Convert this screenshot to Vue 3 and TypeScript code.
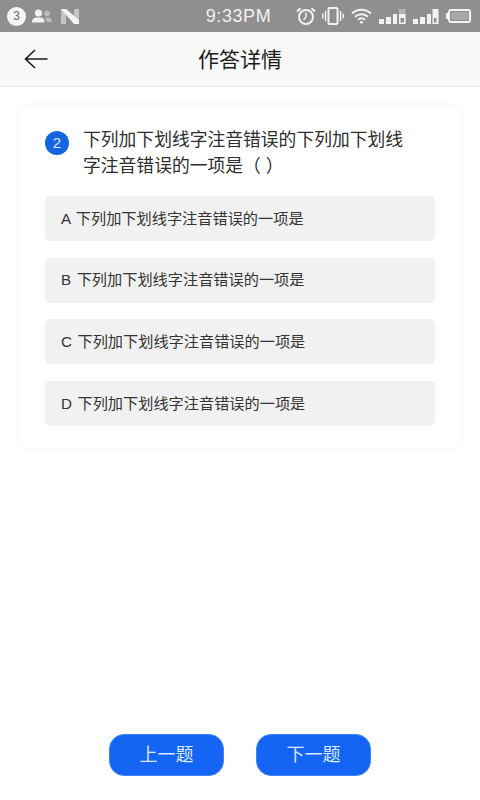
<script setup lang="ts">
const options = ['A', 'B', 'C', 'D'].map((k) => `${k} 下列加下划线字注音错误的一项是`)
</script>

<template>
  <div class="page">
    <div class="status">
      <div class="st-left">
        <span class="num">3</span>
        <svg class="people" width="20" height="14" viewBox="0 0 20 14">
          <circle cx="6.500" cy="4" r="3.600" fill="#f2f2f2" />
          <path d="M0 13.500c0-3 .8-4 4-5h5c3 1 3.500 2 3.500 5z" fill="#f2f2f2" />
          <circle cx="15" cy="4.500" r="2.800" fill="#bdbdbd" />
          <path d="M13 8.500h3.500c2.500.8 3.500 2 3.500 4.500h-5.500c0-2-.5-3.300-1.500-4.500z" fill="#bdbdbd" />
        </svg>
        <svg class="n" width="18" height="15" viewBox="0 0 18 15">
          <path d="M0 0h5v15H0z" fill="#c4c4c4" />
          <path d="M13 0h5v15h-5z" fill="#c4c4c4" />
          <path d="M0 0h5l13 11v4h-5z" fill="#f4f4f4" />
        </svg>
      </div>
      <span class="time">9:33PM</span>
      <div class="st-right">
        <svg width="20" height="18" viewBox="0 0 20 18" fill="none" stroke="#f2f2f2">
          <circle cx="10" cy="10" r="7" stroke-width="2" />
          <path d="M10 5.500V10l-2.500 3" stroke-width="1.500" />
          <path d="M1 4.500L4.500 1.200M19 4.500L15.500 1.200" stroke-width="2" />
        </svg>
        <svg class="vib" width="22" height="18" viewBox="0 0 22 18" fill="none" stroke="#f2f2f2" stroke-width="1.400">
          <rect x="6.500" y="1" width="9" height="16" rx="1" stroke-width="2" />
          <path d="M3.500 4v10M.8 6.500v5M18.500 4v10M21.200 6.500v5" />
        </svg>
        <svg class="wifi" width="21" height="16" viewBox="0 0 21 16" fill="none" stroke="#f2f2f2" stroke-width="2">
          <path d="M1 5.500c5.500-5 13.500-5 19 0M4 8.800c3.800-3.300 9.200-3.300 13 0M7 11.800c2-1.700 5-1.700 7 0" />
          <circle cx="10.500" cy="14.300" r="1.400" fill="#f2f2f2" stroke="none" />
        </svg>
        <svg class="sig" width="27" height="15" viewBox="0 0 27 15" fill="#f2f2f2">
          <rect x="0" y="10" width="5" height="5" />
          <rect x="7" y="8" width="5" height="7" />
          <rect x="14" y="5" width="4" height="10" />
          <path d="M20 0h6.500v15H20z" fill="#b4b4b4" />
          <path d="M20 5h6.500v10H20z" />
          <rect x="21.500" y="9" width="3.500" height="4.500" fill="#8f8f8f" />
        </svg>
        <svg class="sig" width="26" height="15" viewBox="0 0 26 15" fill="#f2f2f2">
          <rect x="0" y="10" width="5" height="5" />
          <rect x="7" y="8" width="5" height="7" />
          <rect x="14" y="5" width="4" height="10" />
          <path d="M19.500 0h6v15h-6z" />
          <rect x="21" y="9" width="2.500" height="4.500" fill="#8f8f8f" />
        </svg>
        <div class="battery"><span></span></div>
      </div>
    </div>

    <header class="nav">
      <svg class="back" width="24" height="20" viewBox="0 0 24 20" fill="none" stroke="#1c1c1c" stroke-width="1.600">
        <path d="M23.500 10H1.500M11 1L1.500 10l9.500 9" />
      </svg>
      <h1>作答详情</h1>
    </header>

    <main class="card">
      <div class="question">
        <span class="badge">2</span>
        <p>下列加下划线字注音错误的下列加下划线字注音错误的一项是（ ）</p>
      </div>
      <div class="options">
        <div v-for="o in options" :key="o" class="option">{{ o }}</div>
      </div>
    </main>

    <footer class="actions">
      <button type="button">上一题</button>
      <button type="button">下一题</button>
    </footer>
  </div>
</template>

<style scoped>
.page {
  width: 480px;
  height: 800px;
  display: flex;
  flex-direction: column;
  background: #fff;
  font-family: "Liberation Sans", "Noto Sans CJK SC", sans-serif;
  overflow: hidden;
}
.status {
  height: 32px;
  flex: none;
  background: #8f8f8f;
  color: #f2f2f2;
  display: grid;
  grid-template-columns: 1fr auto 1fr;
  align-items: center;
  padding: 0 9px 0 7px;
}
.st-left { display: flex; align-items: center; }
.people { margin-left: 6px; }
.n { margin-left: 9px; }
.num {
  width: 19px;
  height: 19px;
  border-radius: 50%;
  background: #f6f6f6;
  color: #666;
  font-size: 12px;
  line-height: 19px;
  text-align: center;
}
.time {
  font-family: "Liberation Sans", sans-serif;
  font-size: 18px;
  letter-spacing: 0.6px;
  margin-left: -1px;
}
.st-right { display: flex; align-items: center; justify-content: flex-end; }
.vib { margin-left: 6px; }
.wifi { margin-left: 7px; }
.sig { margin-left: 7px; }
.battery {
  position: relative;
  width: 23px;
  height: 14px;
  margin-left: 9px;
  border: 2px solid #f2f2f2;
  border-radius: 3px;
  padding: 1px;
  box-sizing: border-box;
}
.battery::before {
  content: "";
  position: absolute;
  left: -4px;
  top: 2px;
  width: 2px;
  height: 6px;
  background: #f2f2f2;
}
.battery span { display: block; height: 100%; background: #a8a8a8; }
.nav {
  height: 55px;
  flex: none;
  background: #f8f8f8;
  border-bottom: 1px solid #e8e8e8;
  display: flex;
  align-items: center;
  justify-content: center;
  position: relative;
  box-sizing: border-box;
}
.back { position: absolute; left: 24px; top: 17px; }
h1 {
  margin: 0;
  font-size: 21px;
  font-weight: 400;
  color: #1c1c1c;
  padding-bottom: 3px;
}
.card {
  margin: 19px 20px 0;
  padding: 22px 25px 22px;
  border-radius: 10px;
  background: #fff;
  box-shadow: 0 0 8px rgba(120, 140, 190, 0.1);
}
.question { display: flex; align-items: flex-start; gap: 14px; }
.badge {
  flex: none;
  width: 24px;
  height: 24px;
  margin-top: 3px;
  border-radius: 50%;
  background: #1565e0;
  color: #dfe9fb;
  font-size: 15px;
  line-height: 24px;
  text-align: center;
}
.question p {
  margin: 0;
  max-width: 326px;
  font-size: 17.800px;
  line-height: 26px;
  color: #2e2e2e;
  position: relative;
  top: -1px;
}
.options { display: flex; flex-direction: column; gap: 16.700px; margin-top: 16px; }
.option {
  height: 45px;
  padding: 0 0 4px 16px;
  box-sizing: border-box;
  display: flex;
  align-items: center;
  border-radius: 5px;
  background: #f1f1f1;
  font-size: 15.200px;
  word-spacing: 1.300px;
  color: #333;
}
.actions {
  margin-top: auto;
  margin-bottom: 24px;
  display: flex;
  justify-content: center;
  gap: 32px;
}
button {
  width: 115px;
  height: 42px;
  border: 1px solid #3f86f5;
  border-radius: 15px;
  background: #1565f5;
  color: #dbe7fb;
  font: inherit;
  font-size: 18px;
  padding: 0 0 5px;
  box-sizing: border-box;
}
</style>
